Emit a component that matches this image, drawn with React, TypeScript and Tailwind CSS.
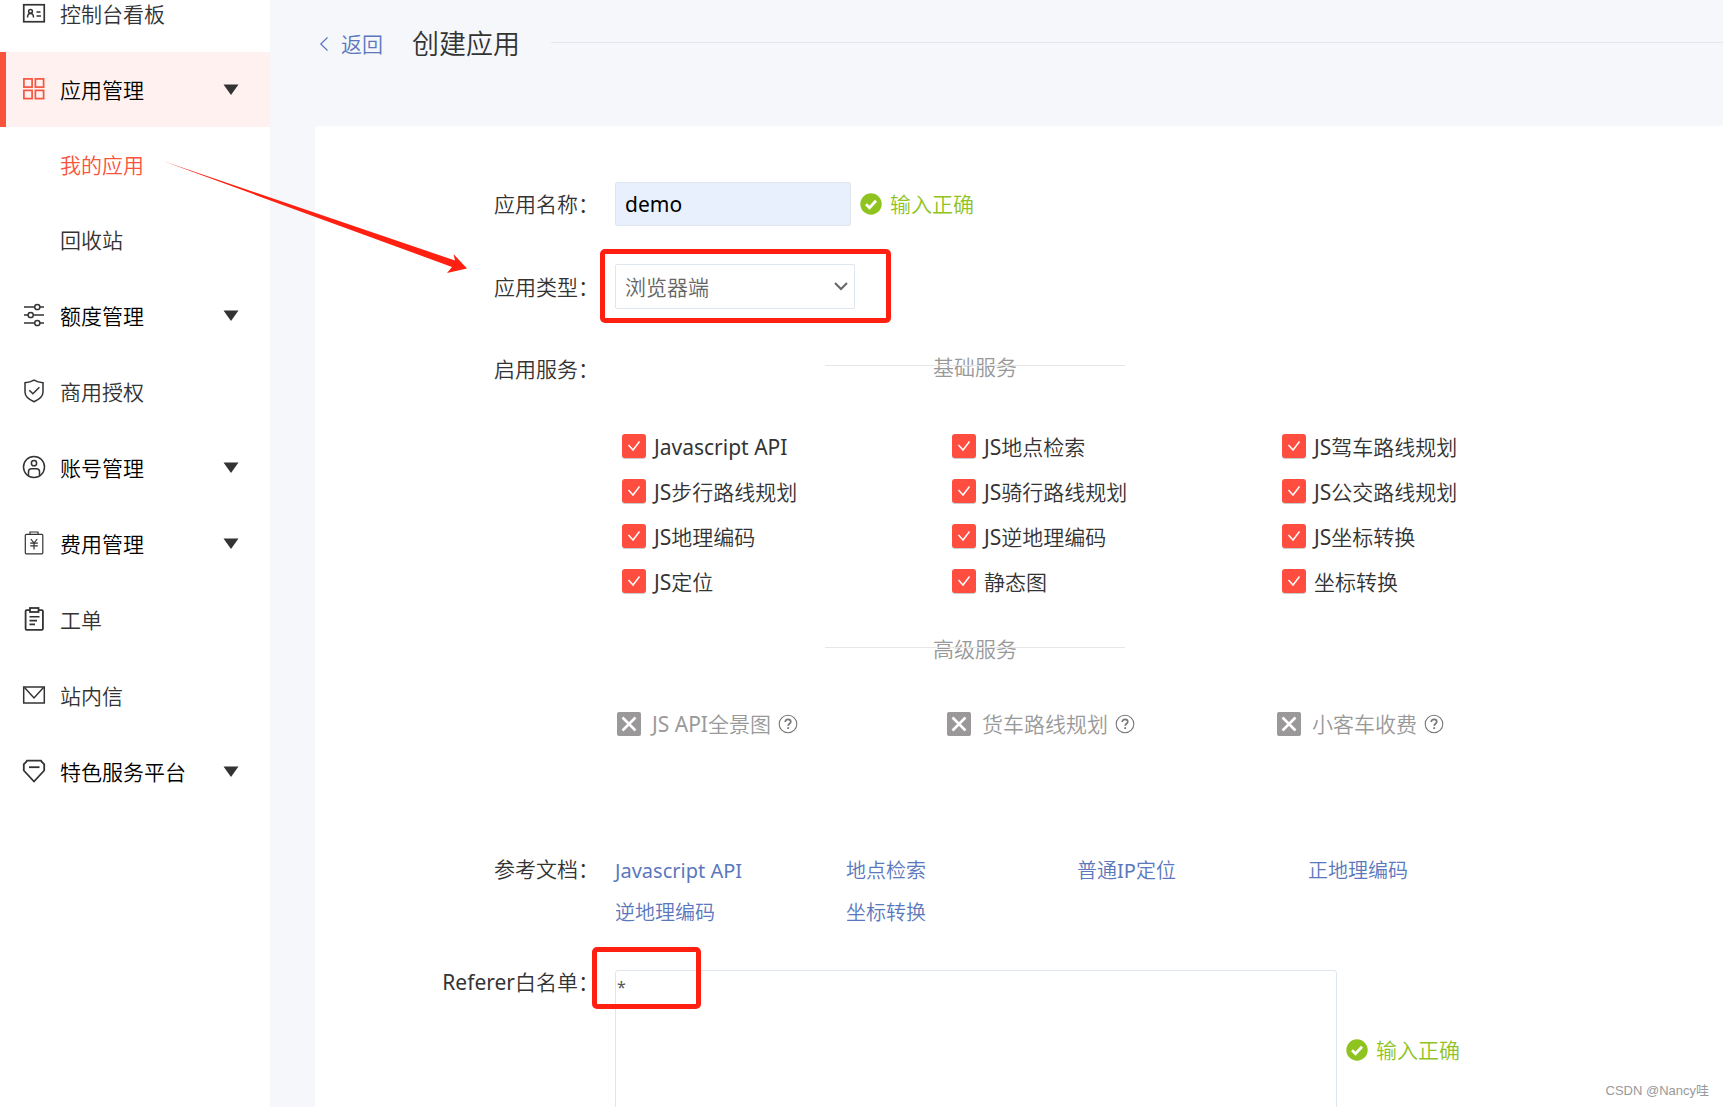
import { useState } from "react";
import type { ReactNode } from "react";

type IconProps = { children: ReactNode; className?: string; width?: number };

function NavIcon({ children, className = "text-[#333]", width = 1.5 }: IconProps) {
  return (
    <svg
      viewBox="0 0 24 24"
      className={`w-6 h-6 mb-0.5 shrink-0 ${className}`}
      fill="none"
      stroke="currentColor"
      strokeWidth={width}
      aria-hidden="true"
    >
      {children}
    </svg>
  );
}

const icons = {
  board: (
    <NavIcon>
      <rect x="1.75" y="3.75" width="20.5" height="17" strokeWidth="1.7" />
      <path d="M5.5 16.5c0-2.6 1.3-4 3-4s3 1.4 3 4M14.5 11h4M14.5 15h4.5" />
      <circle cx="8.5" cy="10.3" r="1.9" />
    </NavIcon>
  ),
  apps: (
    <NavIcon className="text-[#f9533c]" width={1.7}>
      <rect x="1.9" y="1.9" width="8.2" height="8.2" />
      <rect x="13.4" y="1.9" width="8.2" height="8.2" />
      <rect x="1.9" y="13.4" width="8.2" height="8.2" />
      <rect x="13.4" y="13.4" width="8.2" height="8.2" />
    </NavIcon>
  ),
  quota: (
    <NavIcon>
      <path d="M2 4h10.7M18 4h4M2 12h4M11.3 12H22M2 20h10.7M18 20h4" />
      <circle cx="15.3" cy="4" r="2.6" />
      <circle cx="8.7" cy="12" r="2.6" />
      <circle cx="15.3" cy="20" r="2.6" />
    </NavIcon>
  ),
  license: (
    <NavIcon>
      <path d="M12 1.2c2.6 1.6 5.6 2.4 9 2.6v9.2c0 4.4-4.4 7.7-9 9.7-4.6-2-9-5.300-9-9.700V3.800c3.400-.2 6.400-1 9-2.600z" />
      <path d="M7.300 11.200l3.600 3.600 6.500-6.600" />
    </NavIcon>
  ),
  account: (
    <NavIcon>
      <circle cx="12" cy="12" r="10.500" />
      <circle cx="12" cy="8.200" r="2.600" />
      <path d="M6.500 20.800v-4c0-1.800 1.200-3 3-3h5c1.800 0 3 1.200 3 3v4" />
    </NavIcon>
  ),
  cost: (
    <NavIcon width={1.2}>
      <rect x="3.300" y="3.300" width="17.500" height="19.500" rx="1" />
      <path d="M8 3.300V1h8v2.300M8.800 8l3.200 4 3.200-4M8.200 12.200h7.600M8.200 14.800h7.600M12 12v6.500" />
    </NavIcon>
  ),
  ticket: (
    <NavIcon width={1.8}>
      <rect x="3.600" y="3.200" width="17.300" height="19.600" rx="1" />
      <path d="M7.500 9.800h10M7.500 13.600h7.500M7.500 17.400h5.500" strokeWidth="1.6" />
      <rect x="8" y="1" width="8.500" height="4" fill="#fff" />
    </NavIcon>
  ),
  mail: (
    <NavIcon>
      <rect x="1.700" y="4" width="20.600" height="16" />
      <path d="M2.500 4.500L12 15l9.500-10.500" />
    </NavIcon>
  ),
  special: (
    <NavIcon width={1.8}>
      <path d="M5 1.700h14c1 1.600 2 2.600 3.200 3.500v6.300L12 22.500 1.800 11.500V5.200C3 4.300 4 3.300 5 1.700z" />
      <path d="M7 8.200h10.500" />
    </NavIcon>
  ),
};

const afterApps = [
  { name: "额度管理", icon: icons.quota, expandable: true },
  { name: "商用授权", icon: icons.license },
  { name: "账号管理", icon: icons.account, expandable: true },
  { name: "费用管理", icon: icons.cost, expandable: true },
  { name: "工单", icon: icons.ticket },
  { name: "站内信", icon: icons.mail },
  { name: "特色服务平台", icon: icons.special, expandable: true },
];

const basicServices = [
  "Javascript API", "JS地点检索", "JS驾车路线规划",
  "JS步行路线规划", "JS骑行路线规划", "JS公交路线规划",
  "JS地理编码", "JS逆地理编码", "JS坐标转换",
  "JS定位", "静态图", "坐标转换",
];

const advancedServices = ["JS API全景图", "货车路线规划", "小客车收费"];

const docs = ["Javascript API", "地点检索", "普通IP定位", "正地理编码", "逆地理编码", "坐标转换"];

function Caret() {
  return (
    <svg viewBox="0 0 16 12" className="w-4 h-3 ml-auto mr-[31px] fill-[#333]" aria-hidden="true">
      <path d="M0.5 0.5h15L8 11z" />
    </svg>
  );
}

function NavItem({ name, icon, expandable, active }: { name: string; icon: ReactNode; expandable?: boolean; active?: boolean }) {
  const row = `w-full h-[75px] flex items-center gap-[14px] border-l-6 pl-4 ${
    active ? "bg-[#fef1ef] border-[#f9533c]" : "mb-px border-transparent"
  } ${expandable ? "text-black" : "text-[#333]"}`;

  if (expandable) {
    return (
      <button type="button" className={row}>
        {icon}
        {name}
        <Caret />
      </button>
    );
  }
  return (
    <a href="#" className={row}>
      {icon}
      {name}
    </a>
  );
}

function ValidHint() {
  return (
    <span className="flex items-center gap-2 text-[#8fc31f] shrink-0">
      <svg viewBox="0 0 22 22" className="w-[22px] h-[22px]" aria-hidden="true">
        <circle cx="11" cy="11" r="10.7" fill="#8fc31f" />
        <path d="M6 11.3l3.500 3.400 6.500-7" fill="none" stroke="#fff" strokeWidth="2.8" />
      </svg>
      输入正确
    </span>
  );
}

function SectionTitle({ children }: { children: ReactNode }) {
  return (
    <div className="relative w-[300px] h-10 mx-auto flex items-center justify-center text-[#999]">
      {children}
      <span className="absolute inset-x-0 top-[18px] h-px bg-[#e6e6e6]" />
    </div>
  );
}

function ServiceCheckbox({ name }: { name: string }) {
  const [checked, setChecked] = useState(true);
  return (
    <label className="w-[330px] h-[45px] shrink-0 flex items-center gap-2 text-[#333]">
      <span className="relative w-6 h-6 mb-0.5">
        <input
          type="checkbox"
          checked={checked}
          onChange={(e) => setChecked(e.target.checked)}
          className="block appearance-none w-6 h-6 rounded-[3px] border border-[#ccc] checked:border-transparent checked:bg-[#ff4d40] checked:shadow-[0_1px_0_#ccc]"
        />
        {checked && (
          <svg viewBox="0 0 24 24" className="absolute inset-0 w-6 h-6 pointer-events-none" fill="none" stroke="#fff" strokeWidth="1.5" aria-hidden="true">
            <path d="M6.500 11l4.500 5 6.500-8.500" />
          </svg>
        )}
      </span>
      {name}
    </label>
  );
}

function LockedService({ name }: { name: string }) {
  return (
    <div className="w-[330px] h-[45px] shrink-0 flex items-center text-[#999]">
      <label className="flex items-center gap-[11px]">
        <span className="relative w-6 h-6">
          <input type="checkbox" disabled className="block appearance-none w-6 h-6 rounded-[2px] bg-[#9a9898]" />
          <svg viewBox="0 0 24 24" className="absolute inset-0 w-6 h-6" fill="none" stroke="#fff" strokeWidth="2.6" aria-hidden="true">
            <path d="M5.500 5.500l13 13M18.500 5.500l-13 13" />
          </svg>
        </span>
        {name}
      </label>
      <svg viewBox="0 0 20 20" className="w-5 h-5 ml-[7px]" fill="none" stroke="#777" aria-hidden="true">
        <circle cx="10" cy="10" r="8.8" strokeWidth="1.1" />
        <path d="M7.200 8c0-1.700 1.200-2.700 2.800-2.700s2.800 1 2.800 2.500c0 1.900-2.600 2-2.600 4" strokeWidth="1.7" />
        <path d="M10.200 13.200v1.800" strokeWidth="1.8" />
      </svg>
    </div>
  );
}

export default function App() {
  const [appName, setAppName] = useState("demo");
  const [referer, setReferer] = useState("*");

  return (
    <div className="relative flex h-screen overflow-hidden bg-[#f5f7fb] font-['Noto_Sans','Noto_Sans_CJK_SC_DemiLight','Noto_Sans_CJK_SC',sans-serif] text-[21px] leading-8 text-[#333]">
      {/* 侧边栏 */}
      <aside className="w-[270px] shrink-0 bg-white">
        <nav className="-mt-6">
          <NavItem name="控制台看板" icon={icons.board} />
          <NavItem name="应用管理" icon={icons.apps} expandable active />
          <div className="mb-px">
            <a href="#" className="h-[75px] pl-[60px] flex items-center text-[#f9533c]">我的应用</a>
            <a href="#" className="h-[75px] pl-[60px] flex items-center">回收站</a>
          </div>
          {afterApps.map((item) => (
            <NavItem key={item.name} {...item} />
          ))}
        </nav>
      </aside>

      {/* 主内容 */}
      <main className="flex-1 min-w-0 pl-[45px]">
        <header className="h-[126px] pt-6 flex items-start">
          <a href="#" className="h-10 flex items-center gap-3 pl-1 text-[#5b78bd]">
            <svg viewBox="0 0 10 14" className="w-[10px] h-[14px]" fill="none" stroke="currentColor" strokeWidth="1.2" aria-hidden="true">
              <path d="M8.500 0.500L1.800 7l6.700 6.500" />
            </svg>
            返回
          </a>
          <h1 className="h-10 ml-[29px] flex items-center text-[27px]">创建应用</h1>
          <span className="flex-1 h-px mt-[18px] ml-[31px] bg-[#e3e6ec]" />
        </header>

        <form className="bg-white rounded-tl-[4px] pt-14 flex flex-col gap-[38px]">
          <div className="flex gap-4">
            <label htmlFor="app-name" className="w-[284px] shrink-0 h-11 flex items-center justify-end">应用名称：</label>
            <div className="flex items-center gap-[9px]">
              <input
                id="app-name"
                value={appName}
                onChange={(e) => setAppName(e.target.value)}
                className="w-[236px] h-11 px-[9px] rounded-[2px] border border-[#e0e6ef] bg-[#e8f0fe] text-black outline-none"
              />
              <ValidHint />
            </div>
          </div>

          <div className="flex gap-4">
            <label htmlFor="app-type" className="w-[284px] shrink-0 h-[45px] flex items-center justify-end">应用类型：</label>
            <div className="relative">
              <select
                id="app-type"
                className="block appearance-none w-[240px] h-[45px] px-[9px] rounded-[2px] border border-[#e0e6ef] bg-white text-[#666] outline-none"
              >
                <option>浏览器端</option>
              </select>
              <svg viewBox="0 0 14 9" className="absolute right-[7px] top-[18px] w-[14px] h-[9px] pointer-events-none" fill="none" stroke="#666" strokeWidth="2" aria-hidden="true">
                <path d="M1 1l6 6 6-6" />
              </svg>
              <span className="absolute -left-[15px] -right-9 -top-[15px] -bottom-[14px] border-5 border-[#ff2012] rounded-[5px] pointer-events-none" />
            </div>
          </div>

          <div className="flex gap-4">
            <span className="w-[284px] shrink-0 h-11 flex items-center justify-end">启用服务：</span>
            <div className="w-[720px]">
              <SectionTitle>基础服务</SectionTitle>
              <div className="w-[1000px] mt-[37px] pl-[7px] flex flex-wrap">
                {basicServices.map((name) => (
                  <ServiceCheckbox key={name} name={name} />
                ))}
              </div>
              <div className="mt-[25px]">
                <SectionTitle>高级服务</SectionTitle>
              </div>
              <div className="w-[1000px] mt-8 mb-16 pl-[2px] flex">
                {advancedServices.map((name) => (
                  <LockedService key={name} name={name} />
                ))}
              </div>
            </div>
          </div>

          <div className="flex gap-4">
            <span className="w-[284px] shrink-0 h-[42px] flex items-center justify-end">参考文档：</span>
            <div className="w-[924px] pt-0.5 -mb-0.5 grid grid-cols-4 text-[20px] text-[#5b78bd]">
              {docs.map((name) => (
                <a key={name} href="#" className="h-[42px] flex items-center">{name}</a>
              ))}
            </div>
          </div>

          <div className="flex gap-4">
            <label htmlFor="referer" className="w-[284px] shrink-0 h-6 flex items-center justify-end">Referer白名单：</label>
            <div className="relative flex items-center gap-[9px]">
              <textarea
                id="referer"
                value={referer}
                onChange={(e) => setReferer(e.target.value)}
                className="block w-[722px] h-40 px-px resize-none rounded-[3px] border border-[#e0e6ef] text-[#555] text-[16px] outline-none"
              />
              <ValidHint />
              <span className="absolute -left-[23px] -top-[23px] w-[109px] h-[62px] border-5 border-[#ff2012] rounded-[5px] pointer-events-none" />
            </div>
          </div>
        </form>
      </main>

      {/* 箭头标注 */}
      <svg viewBox="0 0 306 114" className="absolute left-[162px] top-[160px] w-[306px] h-[114px] pointer-events-none fill-[#ff2012]" aria-hidden="true">
        <path d="M1 1L293 100.500 291.500 94 305 108.500 285 113 290 107z" />
      </svg>

      <span className="absolute right-[14px] bottom-1 font-['Liberation_Sans','Noto_Sans_CJK_SC',sans-serif] text-[13px] leading-6 text-[#999]">
        CSDN @Nancy哇
      </span>
    </div>
  );
}
